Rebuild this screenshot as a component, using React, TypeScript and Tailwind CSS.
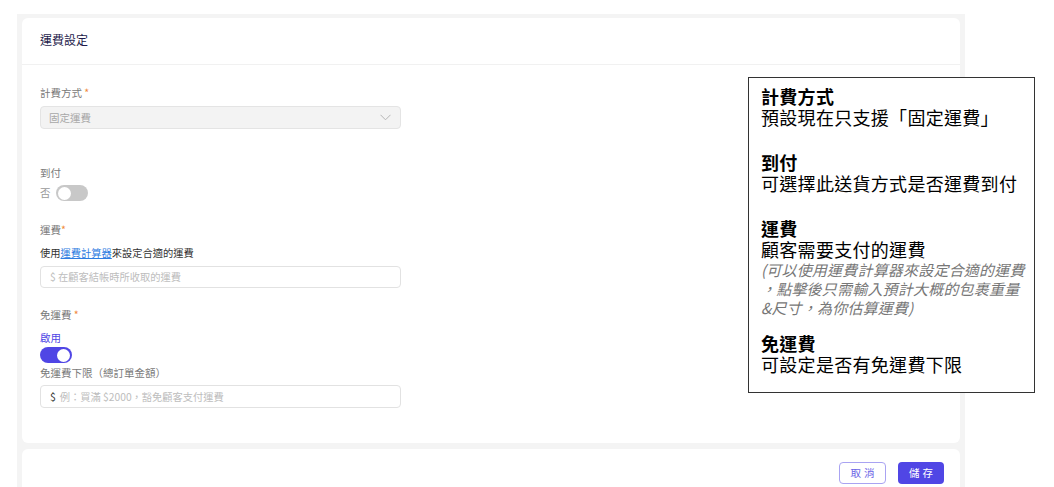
import React from "react";

const ui = { fontFamily: '"Noto Sans CJK TC", "Noto Sans", sans-serif' };

function Toggle({ on }: { on: boolean }) {
  return (
    <div
      className={`w-[32px] h-[16px] rounded-full flex items-center px-[2px] ${
        on ? "bg-[#5046e5] justify-end" : "bg-[#c8c8c8] justify-start"
      }`}
    >
      <div className="w-[13px] h-[13px] rounded-full bg-white" />
    </div>
  );
}

export default function App() {
  return (
    <div className="relative w-[1054px] h-[487px] bg-white overflow-hidden" style={ui}>
      <div className="ml-[17px] mt-[14px] w-[948px] h-[473px] bg-[#f4f4f4] pt-[4px] px-[5px] flex flex-col gap-[6px]">
        {/* main card */}
        <div className="h-[425px] bg-white rounded-[6px] flex flex-col">
          <div className="h-[47px] px-[18px] pb-[3px] flex items-center border-b border-[#f1f1f1]">
            <span className="text-[12px] leading-[16px] text-[#1e1b4b]">運費設定</span>
          </div>
          <div className="px-[18px] pt-[21px] flex flex-col">
            <div className="text-[10.5px] leading-[14px] text-[#7a7a7a]">
              計費方式 <span className="text-[#f08a3c]">*</span>
            </div>
            <div className="mt-[6px] w-[361px] h-[23px] rounded-[4px] bg-[#f3f3f3] border border-[#e4e4e4] flex items-center justify-between pl-[8px] pr-[9px]">
              <span className="text-[10.5px] text-[#a8a8a8]">固定運費</span>
              <svg width="11" height="7" viewBox="0 0 11 7" fill="none">
                <path d="M0.5 0.8 L5.5 5.8 L10.5 0.8" stroke="#b5b5b5" strokeWidth="1" />
              </svg>
            </div>

            <div className="mt-[37px] text-[10.5px] leading-[14px] text-[#7a7a7a]">到付</div>
            <div className="mt-[5px] flex items-center gap-[5px]">
              <span className="text-[10.5px] leading-[14px] text-[#9a9a9a]">否</span>
              <Toggle on={false} />
            </div>

            <div className="mt-[22px] text-[10.5px] leading-[14px] text-[#7a7a7a]">
              運費<span className="text-[#f08a3c]">*</span>
            </div>
            <div className="mt-[9px] text-[10.25px] leading-[14px] text-[#333]">
              使用<span className="text-[#2f7de1] underline">運費計算器</span>來設定合適的運費
            </div>
            <div className="mt-[6px] w-[361px] h-[22px] rounded-[4px] bg-white border border-[#e2e2e2] flex items-center pl-[9px]">
              <span className="text-[10.25px] text-[#bdbdbd]">$ 在顧客結帳時所收取的運費</span>
            </div>

            <div className="mt-[20px] text-[10.5px] leading-[14px] text-[#7a7a7a]">
              免運費 <span className="text-[#f08a3c]">*</span>
            </div>
            <div className="mt-[9px] text-[10.5px] leading-[14px] text-[#5046e5]">啟用</div>
            <div className="mt-[2px]">
              <Toggle on={true} />
            </div>
            <div className="mt-[3px] text-[10.5px] leading-[14px] text-[#7a7a7a]">免運費下限（總訂單金額）</div>
            <div className="mt-[5px] w-[361px] h-[23px] rounded-[4px] bg-white border border-[#e2e2e2] flex items-center pl-[9px] gap-[4px]">
              <span className="text-[10.5px] text-[#333]">$</span>
              <span className="text-[10.25px] text-[#bdbdbd]">例：買滿 $2000，豁免顧客支付運費</span>
            </div>
          </div>
        </div>

        {/* footer card */}
        <div className="flex-1 bg-white rounded-t-[6px] flex justify-end items-start pt-[13px] pr-[16px] gap-[12px]">
          <button className="w-[47px] h-[22px] rounded-[4px] border border-[#a9a3f2] bg-white text-[10.5px] tracking-[3px] text-[#6b63e6] flex items-center justify-center pl-[3px]">
            取消
          </button>
          <button className="w-[46px] h-[22px] rounded-[4px] bg-[#5046e5] text-[10.5px] tracking-[3px] text-white flex items-center justify-center pl-[3px]">
            儲存
          </button>
        </div>
      </div>

      {/* annotation box */}
      <div
        className="absolute left-[748px] top-[77px] w-[287px] h-[316px] bg-white border border-[#333] pl-[12px] pt-[8px] text-black"
        style={{ fontFamily: '"Noto Sans CJK TC", sans-serif' }}
      >
        <div className="text-[18px] leading-[21px] tracking-[0.3px] font-bold">計費方式</div>
        <div className="text-[18px] leading-[21px] tracking-[0.3px]">預設現在只支援「固定運費」</div>
        <div className="h-[24px]" />
        <div className="text-[18px] leading-[21px] tracking-[0.3px] font-bold">到付</div>
        <div className="text-[18px] leading-[21px] tracking-[0.3px]">可選擇此送貨方式是否運費到付</div>
        <div className="h-[24px]" />
        <div className="text-[18px] leading-[21px] tracking-[0.3px] font-bold">運費</div>
        <div className="text-[18px] leading-[21px] tracking-[0.3px]">顧客需要支付的運費</div>
        <div className="text-[15px] leading-[19px] tracking-[0.2px] italic text-[#777] whitespace-nowrap">
          <div>(可以使用運費計算器來設定合適的運費</div>
          <div>，點擊後只需輸入預計大概的包裹重量</div>
          <div>&amp;尺寸，為你估算運費)</div>
        </div>
        <div className="h-[16px]" />
        <div className="text-[18px] leading-[21px] tracking-[0.3px] font-bold">免運費</div>
        <div className="text-[18px] leading-[21px] tracking-[0.3px]">可設定是否有免運費下限</div>
      </div>
    </div>
  );
}
